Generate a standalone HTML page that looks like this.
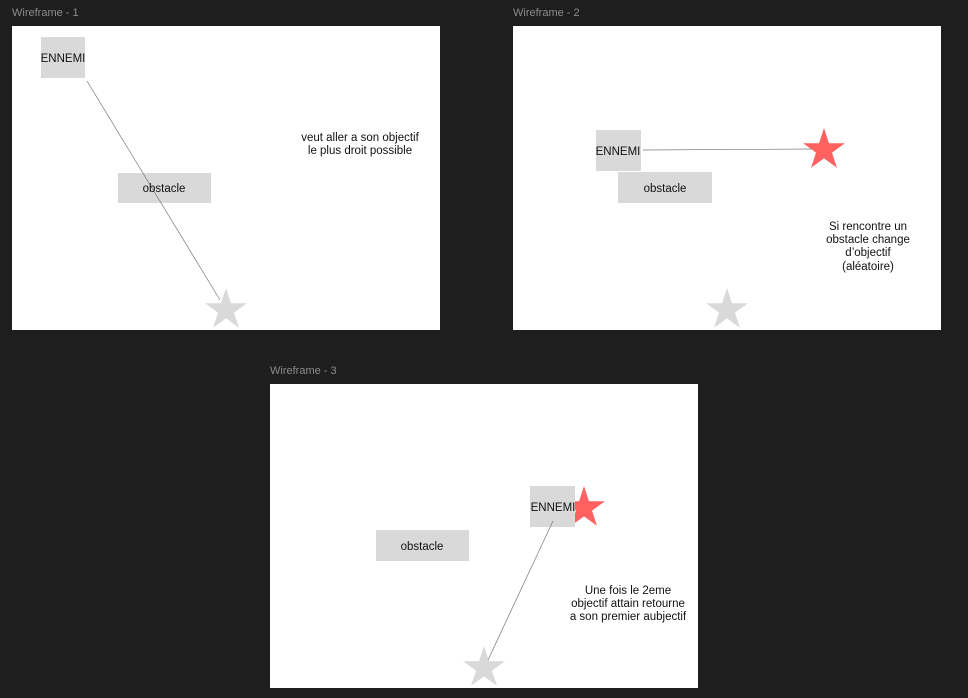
<!DOCTYPE html>
<html><head><meta charset="utf-8"><style>
html,body{margin:0;padding:0;background:#1e1e1e;}
svg{display:block;}
text{font-family:"Liberation Sans",sans-serif;}
</style></head><body>
<svg width="968" height="698" viewBox="0 0 968 698" xmlns="http://www.w3.org/2000/svg">
<defs>
<polygon id="st" points="0,-1 0.2245,-0.309 0.951,-0.309 0.363,0.118 0.588,0.809 0,0.382 -0.588,0.809 -0.363,0.118 -0.951,-0.309 -0.2245,-0.309"/>
</defs>
<rect width="968" height="698" fill="#1e1e1e"/>
<g font-size="11" fill="#8c8c8c">
<text x="12" y="16">Wireframe - 1</text>
<text x="513" y="16">Wireframe - 2</text>
<text x="270" y="374">Wireframe - 3</text>
</g>
<rect x="12" y="26" width="428" height="304" fill="#fff"/>
<rect x="513" y="26" width="428" height="304" fill="#fff"/>
<rect x="270" y="384" width="428" height="304" fill="#fff"/>

<!-- F1 -->
<rect x="41" y="37" width="44" height="41" fill="#d9d9d9"/>
<rect x="118" y="173" width="93" height="30" fill="#d9d9d9"/>
<use href="#st" transform="translate(226,310) scale(22)" fill="#d9d9d9"/>
<line x1="87" y1="81" x2="220" y2="300" stroke="#777" stroke-width="0.7"/>
<g font-size="11.5" fill="#111" text-anchor="middle">
<text x="63" y="62">ENNEMI</text>
<text x="164" y="192">obstacle</text>
<text x="360" y="141">veut aller a son objectif</text>
<text x="360" y="154">le plus droit possible</text>
</g>

<!-- F2 -->
<rect x="596" y="130" width="45" height="41" fill="#d9d9d9"/>
<rect x="618" y="172" width="94" height="31" fill="#d9d9d9"/>
<use href="#st" transform="translate(824,150) scale(22)" fill="#ff6161"/>
<use href="#st" transform="translate(727,310) scale(22)" fill="#d9d9d9"/>
<line x1="643" y1="150" x2="812" y2="149" stroke="#777" stroke-width="0.7"/>
<g font-size="11.5" fill="#111" text-anchor="middle">
<text x="618" y="155">ENNEMI</text>
<text x="665" y="192">obstacle</text>
<text x="868" y="230">Si rencontre un</text>
<text x="868" y="243">obstacle change</text>
<text x="868" y="256">d’objectif</text>
<text x="868" y="270">(aléatoire)</text>
</g>

<!-- F3 -->
<use href="#st" transform="translate(584,508) scale(22)" fill="#ff6161"/>
<rect x="530" y="486" width="45" height="41" fill="#d9d9d9"/>
<rect x="376" y="530" width="93" height="31" fill="#d9d9d9"/>
<use href="#st" transform="translate(484,668) scale(22)" fill="#d9d9d9"/>
<line x1="553" y1="521" x2="488" y2="660" stroke="#777" stroke-width="0.7"/>
<g font-size="11.5" fill="#111" text-anchor="middle">
<text x="553" y="511">ENNEMI</text>
<text x="422" y="550">obstacle</text>
<text x="628" y="594">Une fois le 2eme</text>
<text x="628" y="607">objectif attain retourne</text>
<text x="628" y="620">a son premier aubjectif</text>
</g>
</svg>
</body></html>
